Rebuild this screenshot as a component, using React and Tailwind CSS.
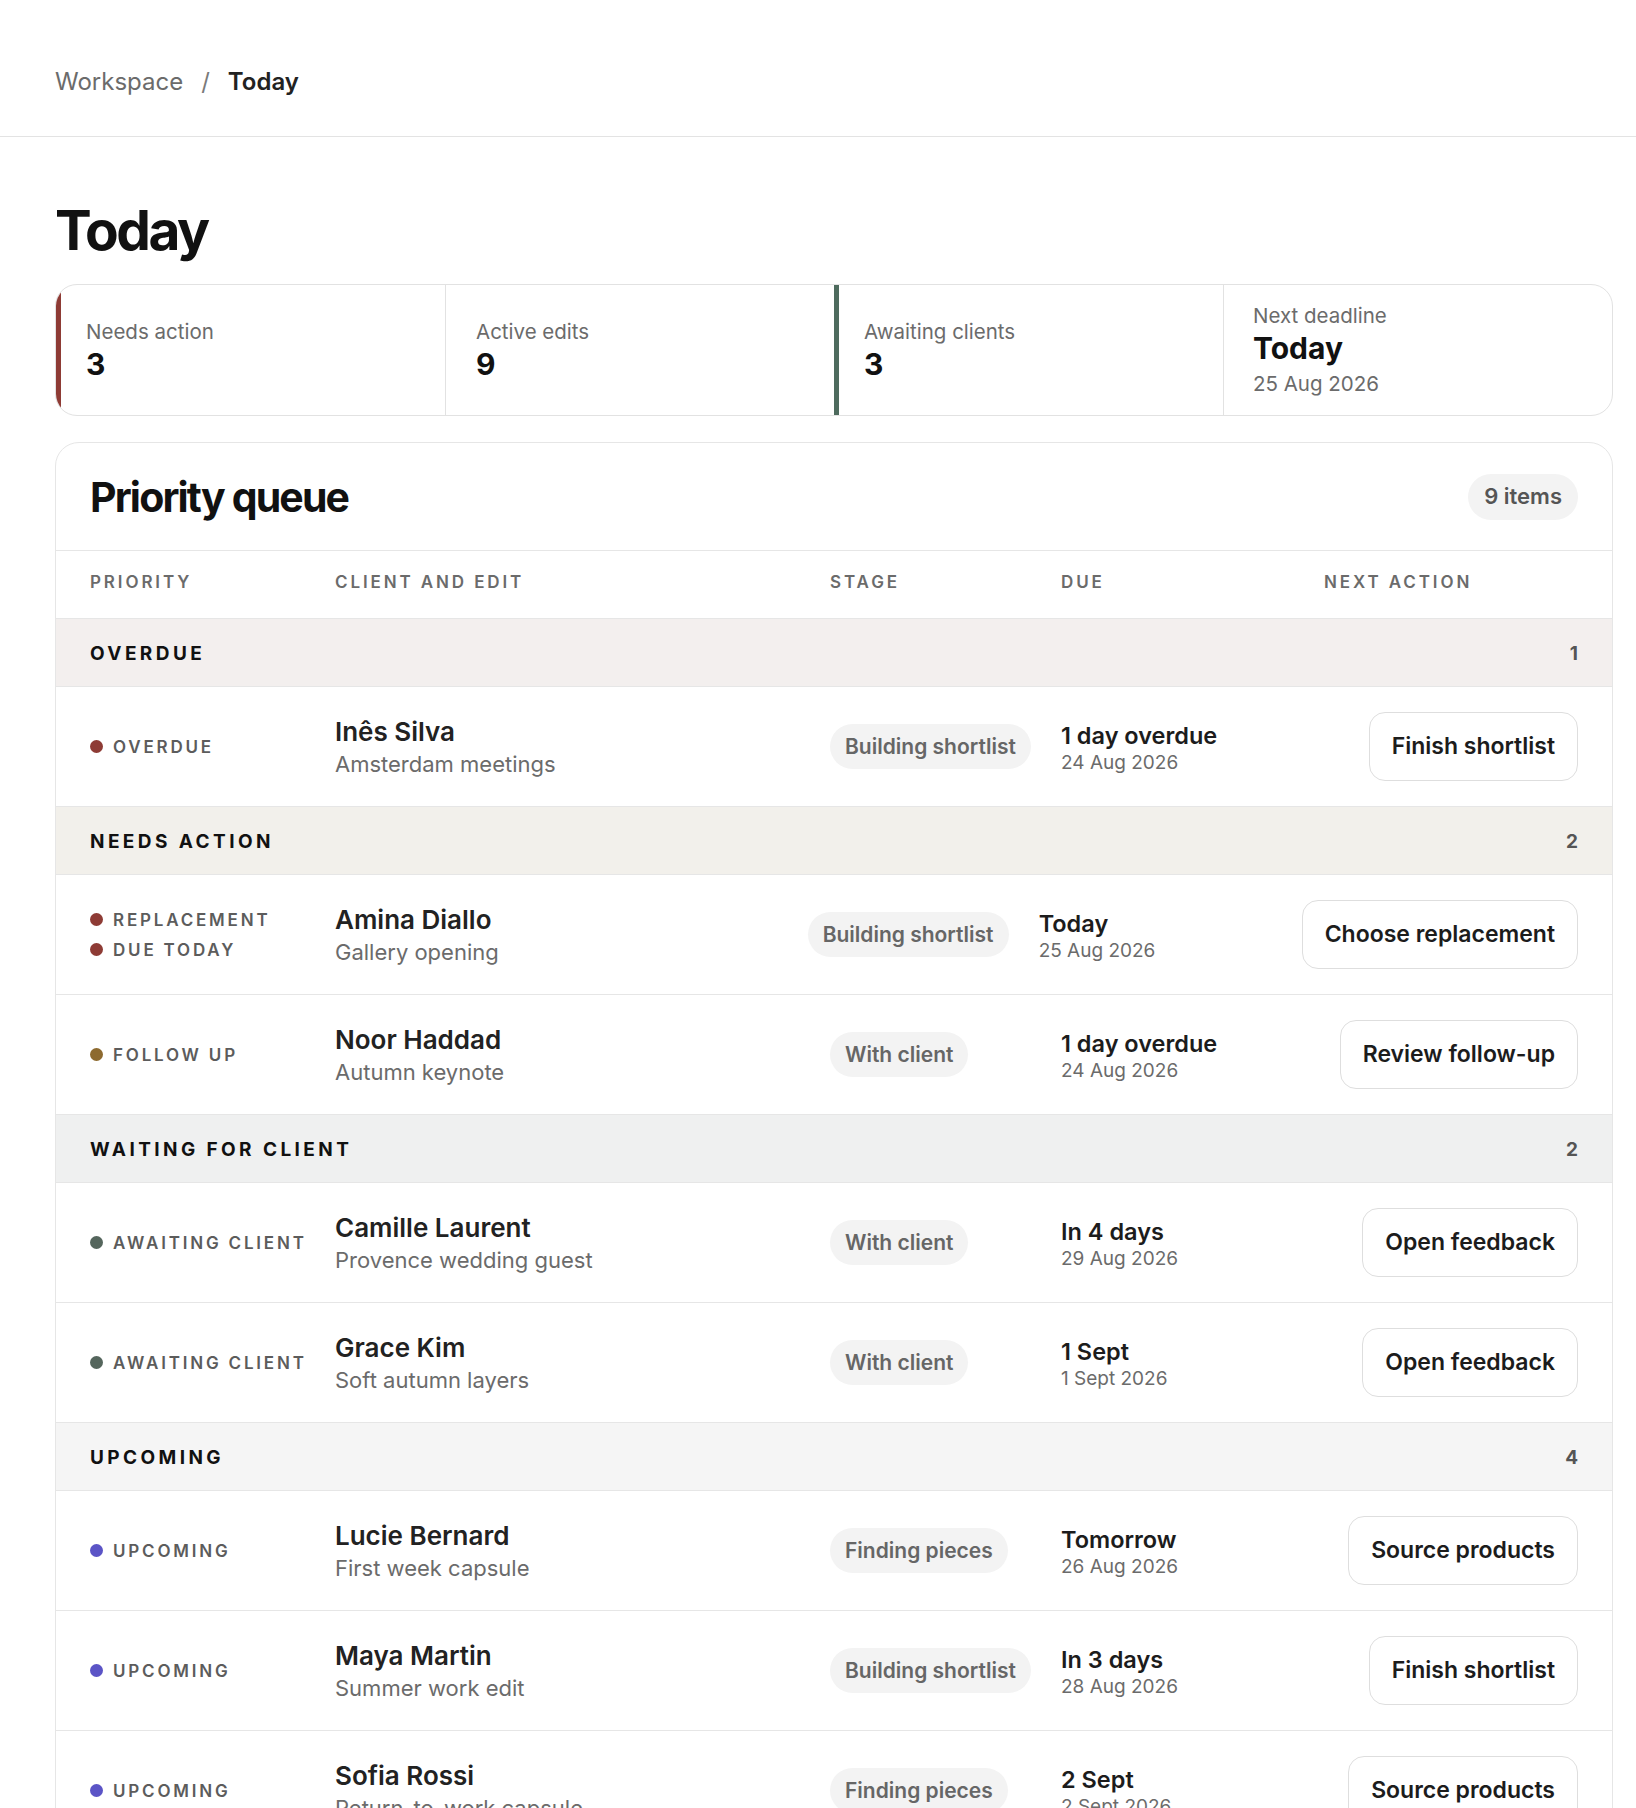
import React from "react";

const DOT = {
  red: "bg-[#8e3b35]",
  gold: "bg-[#8d6a2f]",
  green: "bg-[#55665d]",
  indigo: "bg-[#5b54c6]",
};

const GROUPS = [
  {
    label: "Overdue",
    bg: "bg-[#f3efee]",
    items: [
      {
        tags: [["Overdue", "red"]],
        name: "Inês Silva",
        edit: "Amsterdam meetings",
        stage: "Building shortlist",
        due: "1 day overdue",
        date: "24 Aug 2026",
        action: "Finish shortlist",
      },
    ],
  },
  {
    label: "Needs action",
    bg: "bg-[#f2f0eb]",
    items: [
      {
        tags: [
          ["Replacement", "red"],
          ["Due today", "red"],
        ],
        name: "Amina Diallo",
        edit: "Gallery opening",
        stage: "Building shortlist",
        due: "Today",
        date: "25 Aug 2026",
        action: "Choose replacement",
      },
      {
        tags: [["Follow up", "gold"]],
        name: "Noor Haddad",
        edit: "Autumn keynote",
        stage: "With client",
        due: "1 day overdue",
        date: "24 Aug 2026",
        action: "Review follow-up",
      },
    ],
  },
  {
    label: "Waiting for client",
    bg: "bg-[#eff0f0]",
    items: [
      {
        tags: [["Awaiting client", "green"]],
        name: "Camille Laurent",
        edit: "Provence wedding guest",
        stage: "With client",
        due: "In 4 days",
        date: "29 Aug 2026",
        action: "Open feedback",
      },
      {
        tags: [["Awaiting client", "green"]],
        name: "Grace Kim",
        edit: "Soft autumn layers",
        stage: "With client",
        due: "1 Sept",
        date: "1 Sept 2026",
        action: "Open feedback",
      },
    ],
  },
  {
    label: "Upcoming",
    bg: "bg-[#f5f5f5]",
    items: [
      {
        tags: [["Upcoming", "indigo"]],
        name: "Lucie Bernard",
        edit: "First week capsule",
        stage: "Finding pieces",
        due: "Tomorrow",
        date: "26 Aug 2026",
        action: "Source products",
      },
      {
        tags: [["Upcoming", "indigo"]],
        name: "Maya Martin",
        edit: "Summer work edit",
        stage: "Building shortlist",
        due: "In 3 days",
        date: "28 Aug 2026",
        action: "Finish shortlist",
      },
      {
        tags: [["Upcoming", "indigo"]],
        name: "Sofia Rossi",
        edit: "Return-to-work capsule",
        stage: "Finding pieces",
        due: "2 Sept",
        date: "2 Sept 2026",
        action: "Source products",
      },
      {
        tags: [["Upcoming", "indigo"]],
        name: "Léa Moreau",
        edit: "Autumn travel edit",
        stage: "Finding pieces",
        due: "4 Sept",
        date: "4 Sept 2026",
        action: "Source products",
      },
    ],
  },
];

const COLS = "grid grid-cols-[245px_1fr_231px_263px_minmax(254px,auto)] items-center";

function Stat({ label, value, sub, accent }) {
  return (
    <div className={`flex flex-col justify-center ${accent}`}>
      <span className="text-[20.5px] leading-[28px] text-[#6b6b6b]">{label}</span>
      <span className="text-[30px] leading-[36px] font-bold text-[#111]">{value}</span>
      {sub && <span className="mt-[4px] text-[20.5px] leading-[28px] text-[#6b6b6b]">{sub}</span>}
    </div>
  );
}

function Row({ item }) {
  return (
    <div className={`${COLS} py-[25px] px-[34px] border-b border-[#e6e6e6] bg-white`}>
      <div className="flex flex-col gap-[6px]">
        {item.tags.map(([t, c]) => (
          <div key={t} className="flex items-center gap-[10px]">
            <span className={`w-[13px] h-[13px] rounded-full ${DOT[c]}`} />
            <span className="text-[17px] leading-[24px] font-semibold uppercase tracking-[0.165em] text-[#5c5c5c]">
              {t}
            </span>
          </div>
        ))}
      </div>
      <div className="flex flex-col pt-[2px]">
        <span className="text-[26px] leading-[31px] font-semibold text-[#222]">{item.name}</span>
        <span className="mt-[2px] text-[22px] leading-[30px] text-[#6b6b6b]">{item.edit}</span>
      </div>
      <div>
        <span className="inline-flex items-center h-[45px] px-[15px] rounded-full bg-[#f3f3f3] text-[21px] font-semibold text-[#666]">
          {item.stage}
        </span>
      </div>
      <div className="flex flex-col pt-[4px]">
        <span className="text-[23.5px] leading-[29px] font-semibold text-[#1c1c1c]">{item.due}</span>
        <span className="text-[19px] leading-[26px] text-[#6b6b6b]">{item.date}</span>
      </div>
      <div className="flex justify-end">
        <button className="h-[69px] px-[22px] rounded-[16px] border border-[#dedede] bg-white text-[23px] font-semibold text-[#1c1c1c] whitespace-nowrap">
          {item.action}
        </button>
      </div>
    </div>
  );
}

export default function App() {
  return (
    <div className="min-h-screen bg-white font-[Inter,sans-serif] text-[#1c1c1c]">
      {/* breadcrumb bar */}
      <header className="h-[137px] pt-[65px] pl-[55px] border-b border-[#e3e3e3]">
        <nav className="flex items-center gap-[18px] text-[24px] leading-[34px]">
          <span className="text-[#6b6b6b]">Workspace</span>
          <span className="text-[#7a7a7a]">/</span>
          <span className="font-semibold text-[#222]">Today</span>
        </nav>
      </header>

      <main className="pt-[66px] pl-[55px] pr-[23px] pb-[60px]">
        <h1 className="text-[55px] leading-none font-bold tracking-[-0.045em] text-[#111]">Today</h1>

        {/* summary strip */}
        <section className="mt-[26px] grid grid-cols-4 h-[132px] rounded-[22px] border border-[#e2e2e2] overflow-hidden">
          <Stat label="Needs action" value="3" accent="border-l-[5px] border-[#8e3b35] pl-[25px]" />
          <Stat label="Active edits" value="9" accent="border-l border-[#e2e2e2] pl-[30px]" />
          <Stat label="Awaiting clients" value="3" accent="border-l-[5px] border-[#4e6b5e] pl-[25px]" />
          <Stat label="Next deadline" value="Today" sub="25 Aug 2026" accent="border-l border-[#e2e2e2] pl-[29px]" />
        </section>

        {/* queue */}
        <section className="mt-[26px] rounded-t-[24px] border border-[#e6e6e6] overflow-hidden">
          <div className="h-[108px] flex items-center justify-between px-[34px] border-b border-[#e6e6e6]">
            <h2 className="text-[41px] leading-[50px] font-bold tracking-[-0.045em] text-[#111]">Priority queue</h2>
            <span className="h-[46px] px-[16px] flex items-center rounded-full bg-[#f3f3f3] text-[22px] font-semibold text-[#555]">
              9 items
            </span>
          </div>

          <div className={`${COLS} h-[68px] pb-[3px] px-[34px] border-b border-[#e6e6e6] text-[17px] font-semibold uppercase tracking-[0.17em] text-[#6b6b6b]`}>
            <span>Priority</span>
            <span>Client and edit</span>
            <span>Stage</span>
            <span>Due</span>
            <span>Next action</span>
          </div>

          {GROUPS.map((g) => (
            <div key={g.label}>
              <div className={`h-[68px] pt-[3px] flex items-center justify-between px-[34px] border-b border-[#e6e6e6] ${g.bg}`}>
                <span className="text-[19px] font-bold uppercase tracking-[0.18em] text-[#111]">{g.label}</span>
                <span className="text-[19px] font-bold text-[#555]">{g.items.length}</span>
              </div>
              {g.items.map((it) => (
                <Row key={it.name} item={it} />
              ))}
            </div>
          ))}
        </section>
      </main>
    </div>
  );
}
